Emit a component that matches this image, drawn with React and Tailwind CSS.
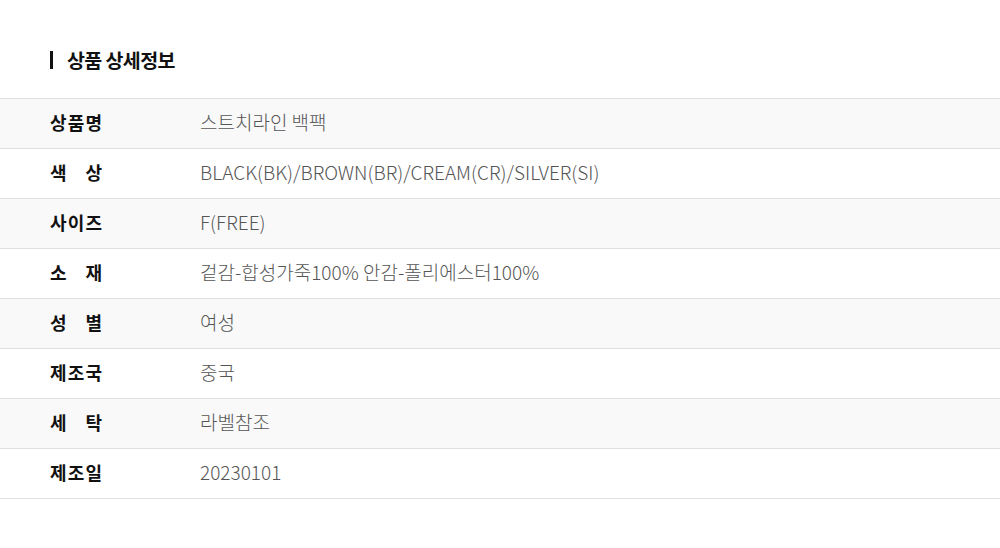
import React from "react";

const rows = [
  ["상품명", "스트치라인 백팩"],
  ["색상", "BLACK(BK)/BROWN(BR)/CREAM(CR)/SILVER(SI)"],
  ["사이즈", "F(FREE)"],
  ["소재", "겉감-합성가죽100% 안감-폴리에스터100%"],
  ["성별", "여성"],
  ["제조국", "중국"],
  ["세탁", "라벨참조"],
  ["제조일", "20230101"],
];

export default function App() {
  return (
    <div
      className="w-[1000px] h-[548px] bg-white pt-[48px]"
      style={{ fontFamily: '"Noto Sans CJK KR", "Noto Sans", sans-serif' }}
    >
      <div className="flex items-center h-[24px] pl-[50px]">
        <div className="w-[3px] h-[18px] bg-[#111]" />
        <h2 className="ml-[14px] text-[19.5px] font-bold text-[#111] tracking-[-0.6px] leading-none">
          상품 상세정보
        </h2>
      </div>
      <div className="mt-[26px] border-t border-[#e0e0e0]">
        {rows.map(([label, value], i) => (
          <div
            key={i}
            className={`flex items-center h-[50px] pb-[4px] border-b border-[#e0e0e0] ${
              i % 2 === 0 ? "bg-[#f9f9f9]" : "bg-white"
            }`}
          >
            <div className="w-[200px] shrink-0 pl-[50px]">
              <div className="w-[52px] flex justify-between text-[18px] font-bold text-[#111] leading-none">
                {label.split("").map((c, j) => (
                  <span key={j}>{c}</span>
                ))}
              </div>
            </div>
            <div className="text-[19px] font-light text-[#555] leading-none">
              {value}
            </div>
          </div>
        ))}
      </div>
    </div>
  );
}
